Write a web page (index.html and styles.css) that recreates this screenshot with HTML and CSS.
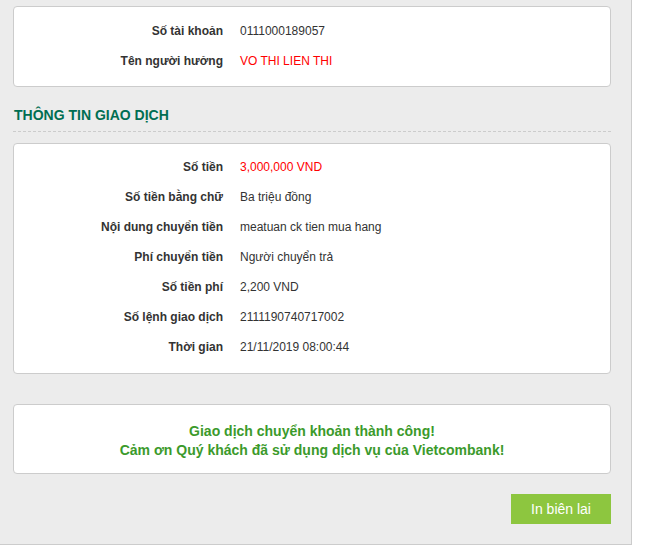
FILE: index.html
```html
<!DOCTYPE html>
<html lang="vi">
<head>
<meta charset="utf-8">
<link rel="stylesheet" href="styles.css">
</head>
<body>
<div class="panel">
  <div class="card info">
    <div class="row"><span class="label">Số tài khoản</span><span class="value">0111000189057</span></div>
    <div class="row"><span class="label">Tên người hưởng</span><span class="value red">VO THI LIEN THI</span></div>
  </div>
  <h2 class="section-title">THÔNG TIN GIAO DỊCH</h2>
  <div class="card info info-tx">
    <div class="row"><span class="label">Số tiền</span><span class="value red">3,000,000 VND</span></div>
    <div class="row"><span class="label">Số tiền bằng chữ</span><span class="value">Ba triệu đồng</span></div>
    <div class="row"><span class="label">Nội dung chuyển tiền</span><span class="value">meatuan ck tien mua hang</span></div>
    <div class="row"><span class="label">Phí chuyển tiền</span><span class="value">Người chuyển trả</span></div>
    <div class="row"><span class="label">Số tiền phí</span><span class="value">2,200 VND</span></div>
    <div class="row"><span class="label">Số lệnh giao dịch</span><span class="value">2111190740717002</span></div>
    <div class="row"><span class="label">Thời gian</span><span class="value">21/11/2019 08:00:44</span></div>
  </div>
  <div class="card success">
    <p>Giao dịch chuyển khoản thành công!</p>
    <p>Cảm ơn Quý khách đã sử dụng dịch vụ của Vietcombank!</p>
  </div>
  <div class="actions">
    <button class="btn-print">In biên lai</button>
  </div>
</div>
</body>
</html>
```
FILE: styles.css
```css
html, body {
  margin: 0;
  padding: 0;
  background: #ffffff;
}
body {
  font-family: "Liberation Sans", Arial, sans-serif;
  color: #333333;
}
.panel {
  width: 598px;
  background: #ececec;
  border-right: 1px solid #cccccc;
  border-bottom: 1px solid #cccccc;
  padding: 6px 20px 20px 13px;
}
.card {
  background: #ffffff;
  border: 1px solid #cccccc;
  border-radius: 4px;
}
.info {
  padding: 9px 0 10px;
}
.info-tx {
  padding: 8px 0 11px;
}
.row {
  display: grid;
  grid-template-columns: 209px 1fr;
  column-gap: 17px;
  height: 30px;
  align-items: center;
  font-size: 12px;
}
.label {
  text-align: right;
  font-weight: bold;
}
.red {
  color: #ff0000;
}
.section-title {
  margin: 18px 0 11px;
  padding: 0 0 6px 1px;
  font-size: 14px;
  line-height: 20px;
  font-weight: bold;
  color: #006e52;
  border-bottom: 1px dashed #cccccc;
}
.success {
  margin-top: 30px;
  padding: 17px 0 13px;
  text-align: center;
  color: #3b9a2b;
  font-weight: bold;
  font-size: 14px;
  line-height: 19px;
}
.success p {
  margin: 0;
}
.actions {
  display: flex;
  justify-content: flex-end;
  margin-top: 20px;
}
.btn-print {
  width: 100px;
  height: 30px;
  border: none;
  background: #8dc63f;
  color: #ffffff;
  font-family: "Liberation Sans", Arial, sans-serif;
  font-size: 14px;
  padding: 0;
}
```
